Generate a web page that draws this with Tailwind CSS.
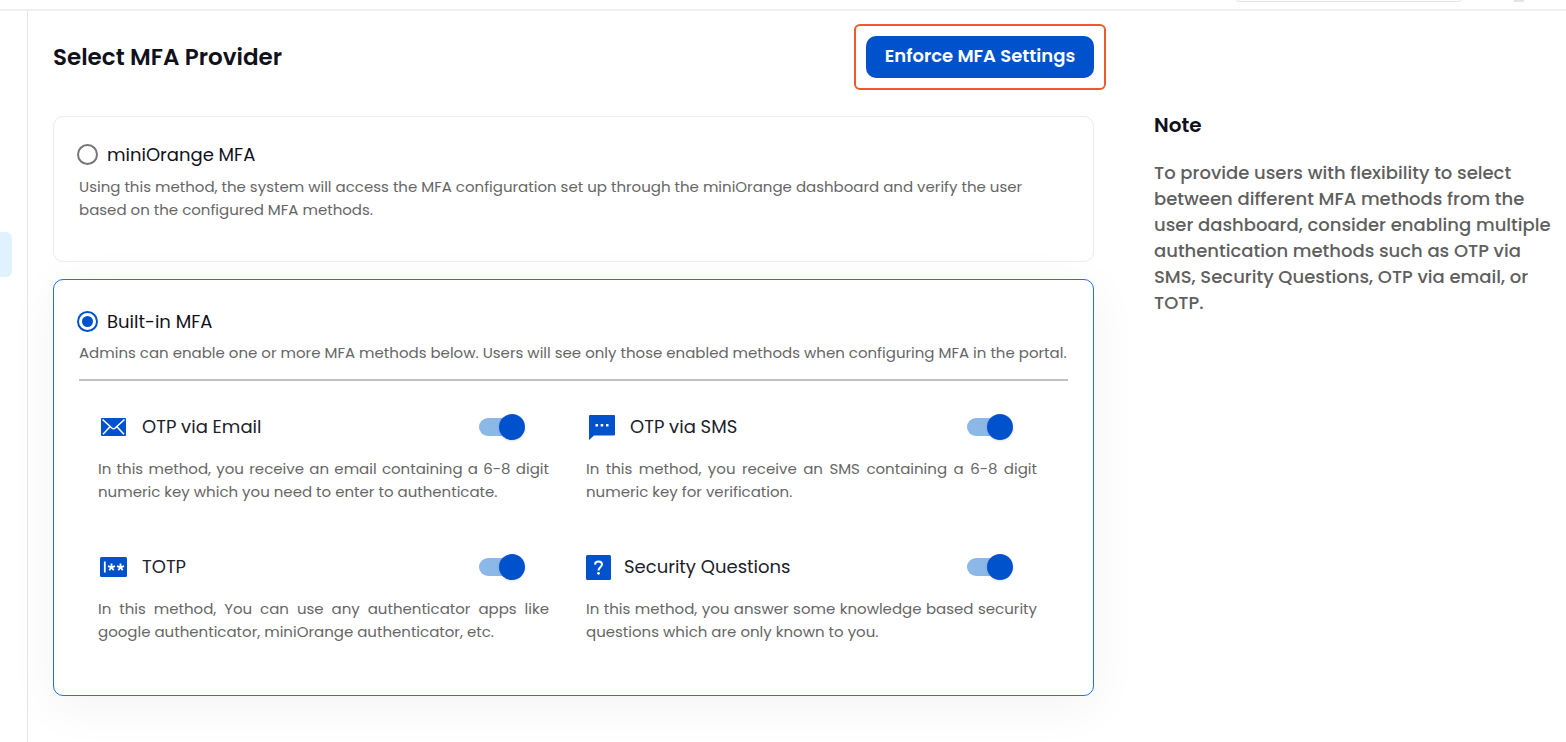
<!DOCTYPE html>
<html lang="en">
<head>
  <meta charset="UTF-8">
  <meta name="viewport" content="width=device-width, initial-scale=1">
  <title>Select MFA Provider</title>
  <!-- Tailwind CSS via CDN -->
  <script src="https://cdn.jsdelivr.net/npm/@tailwindcss/browser@4"></script>
</head>
<body class="min-h-screen flex flex-col bg-white text-[#11111b] font-[Poppins,Inter,sans-serif] overflow-x-hidden">

  <!-- Top bar -->
  <header class="flex h-[11px] items-end justify-end gap-[50px] overflow-hidden border-b-2 border-[#efefef] pr-[42px] pb-[7px]">
    <input type="search" aria-label="Search" class="h-9 w-[230px] shrink-0 rounded-md border border-[#e3e5e8]">
    <button type="button" aria-label="Account" class="h-8 w-[10px] shrink-0 bg-[#e1e4ec]"></button>
  </header>

  <div class="flex flex-1">
    <!-- Collapsed sidebar -->
    <nav class="w-7 shrink-0 border-r border-[#e6e6e6] pt-[221px]" aria-label="Main">
      <a href="#" aria-label="MFA" class="block h-[45px] w-3 rounded-r-md bg-[#e1f2ff]"></a>
    </nav>

    <div class="flex flex-1 gap-[60px] pl-[25px] pr-3">
      <main class="min-w-0 flex-1 pb-[46px]">
        <div class="flex items-center justify-between pt-[25px]">
          <h1 class="text-[23px] leading-8 font-semibold">Select MFA Provider</h1>
          <div class="relative">
            <button type="button" class="h-[42px] w-[228px] rounded-[10px] bg-[#0052cc] pb-[2px] text-lg font-semibold text-white">Enforce MFA Settings</button>
            <span class="pointer-events-none absolute -inset-3 rounded-md border-2 border-[#f0592a]"></span>
          </div>
        </div>

        <!-- miniOrange MFA -->
        <section class="mt-[38px] rounded-[10px] border border-[#ececec] px-[23px] pt-6 pb-10">
          <div class="flex items-center gap-[9px]">
            <input type="radio" name="provider" id="miniorange" class="size-[21px] appearance-none rounded-full border-2 border-[#767676]">
            <label for="miniorange" class="text-lg leading-[27px]">miniOrange MFA</label>
          </div>
          <p class="mt-[7px] px-[2px] text-[15px] leading-[23px] text-[#666]">Using this method, the system will access the MFA configuration set up through the miniOrange dashboard and verify the user based on the configured MFA methods.</p>
        </section>

        <!-- Built-in MFA -->
        <section class="mt-[17px] rounded-[10px] border border-[#1d6fff] bg-white pt-7 pb-[52px] shadow-[0_10px_50px_rgba(0,0,0,0.05)]">
          <div class="px-[23px]">
            <div class="flex items-center gap-[9px]">
              <input type="radio" name="provider" id="builtin" checked class="size-[21px] appearance-none rounded-full border-2 border-[#0052cc] bg-[#0052cc] bg-clip-content p-[3px]">
              <label for="builtin" class="text-lg leading-[27px]">Built-in MFA</label>
            </div>
            <p class="mt-[6px] px-[2px] text-[15px] leading-[23px] text-[#666]">Admins can enable one or more MFA methods below. Users will see only those enabled methods when configuring MFA in the portal.</p>
            <hr class="mx-[2px] mt-[15px] border-t-2 border-[#c2c2c2]">
          </div>

          <div class="mt-8 grid grid-cols-2 gap-x-[37px] gap-y-[50px] pl-11 pr-14">
            <div>
              <div class="flex h-7 items-center pr-6">
                <svg class="ml-[3px] h-[18px] w-[25px]" viewBox="0 0 25 18" fill="none">
                  <rect width="25" height="18" rx="1" fill="#0052cc"/>
                  <path d="M1.5 1.5 10.8 10a2.5 2.5 0 0 0 3.4 0L23.5 1.5M2 16.2l6.8-7.3M23 16.2l-6.8-7.3" stroke="#fff" stroke-width="1.5"/>
                </svg>
                <label for="otp-email" class="ml-4 text-lg text-[#20202a]">OTP via Email</label>
                <span class="relative ml-auto flex h-[26px] w-[46px] items-center">
                  <input type="checkbox" role="switch" id="otp-email" checked class="peer h-[18px] w-10 appearance-none rounded-full bg-[#ccc] checked:bg-[#8cb8e8]">
                  <span class="pointer-events-none absolute left-0 size-[26px] rounded-full bg-white shadow peer-checked:left-5 peer-checked:bg-[#0052cc]"></span>
                </span>
              </div>
              <p class="mt-4 text-justify text-[15px] leading-[23px] text-[#666]">In this method, you receive an email containing a 6-8 digit numeric key which you need to enter to authenticate.</p>
            </div>

            <div>
              <div class="flex h-7 items-center pr-6">
                <svg class="ml-[3px] h-[25px] w-[26px]" viewBox="0 0 26 25">
                  <path d="M0 1a1 1 0 0 1 1-1h24a1 1 0 0 1 1 1v18.500a1 1 0 0 1-1 1H5L0 25Z" fill="#0052cc"/>
                  <path d="M6.500 9h2.500v2.500H6.500zM11.700 9h2.500v2.500h-2.500zM17 9h2.500v2.500H17z" fill="#fff"/>
                </svg>
                <label for="otp-sms" class="ml-[15px] text-lg text-[#20202a]">OTP via SMS</label>
                <span class="relative ml-auto flex h-[26px] w-[46px] items-center">
                  <input type="checkbox" role="switch" id="otp-sms" checked class="peer h-[18px] w-10 appearance-none rounded-full bg-[#ccc] checked:bg-[#8cb8e8]">
                  <span class="pointer-events-none absolute left-0 size-[26px] rounded-full bg-white shadow peer-checked:left-5 peer-checked:bg-[#0052cc]"></span>
                </span>
              </div>
              <p class="mt-4 text-justify text-[15px] leading-[23px] text-[#666]">In this method, you receive an SMS containing a 6-8 digit numeric key for verification.</p>
            </div>

            <div>
              <div class="flex h-7 items-center pr-6">
                <svg class="ml-[2px] h-5 w-[27px]" viewBox="0 0 27 20" fill="none" stroke="#fff">
                  <rect width="27" height="20" rx="1.500" fill="#0052cc" stroke="none"/>
                  <path d="M4.800 4.500v11" stroke-width="1.800"/>
                  <path d="M11.500 10.300V6.600M11.500 10.300l3.500-1.100M11.500 10.300l2.200 3M11.500 10.300l-2.200 3M11.500 10.300 8 9.200" stroke-width="1.800"/>
                  <path d="M20.500 10.300V6.600M20.500 10.300l3.500-1.100M20.500 10.300l2.200 3M20.500 10.300l-2.200 3M20.500 10.300 17 9.200" stroke-width="1.800"/>
                </svg>
                <label for="totp" class="ml-[15px] text-lg text-[#20202a]">TOTP</label>
                <span class="relative ml-auto flex h-[26px] w-[46px] items-center">
                  <input type="checkbox" role="switch" id="totp" checked class="peer h-[18px] w-10 appearance-none rounded-full bg-[#ccc] checked:bg-[#8cb8e8]">
                  <span class="pointer-events-none absolute left-0 size-[26px] rounded-full bg-white shadow peer-checked:left-5 peer-checked:bg-[#0052cc]"></span>
                </span>
              </div>
              <p class="mt-4 text-justify text-[15px] leading-[23px] text-[#666]">In this method, You can use any authenticator apps like google authenticator, miniOrange authenticator, etc.</p>
            </div>

            <div>
              <div class="flex h-7 items-center pr-6">
                <svg class="size-[25px]" viewBox="0 0 25 25" fill="none">
                  <rect width="25" height="25" rx="1.500" fill="#0052cc"/>
                  <path d="M9 9.600c.1-2 1.500-3.200 3.500-3.200 2.100 0 3.500 1.200 3.500 2.900 0 2.800-3.500 3-3.500 6.100" stroke="#fff" stroke-width="2"/>
                  <circle cx="12.500" cy="18.300" r="1.400" fill="#fff"/>
                </svg>
                <label for="questions" class="ml-[13px] text-lg text-[#20202a]">Security Questions</label>
                <span class="relative ml-auto flex h-[26px] w-[46px] items-center">
                  <input type="checkbox" role="switch" id="questions" checked class="peer h-[18px] w-10 appearance-none rounded-full bg-[#ccc] checked:bg-[#8cb8e8]">
                  <span class="pointer-events-none absolute left-0 size-[26px] rounded-full bg-white shadow peer-checked:left-5 peer-checked:bg-[#0052cc]"></span>
                </span>
              </div>
              <p class="mt-4 text-justify text-[15px] leading-[23px] text-[#666]">In this method, you answer some knowledge based security questions which are only known to you.</p>
            </div>
          </div>
        </section>
      </main>

      <!-- Note -->
      <aside class="w-[400px] shrink-0 pt-[99px]">
        <h2 class="text-xl leading-[30px] font-semibold">Note</h2>
        <p class="mt-5 text-lg leading-[26px] font-medium text-[#5f5f5f]">To provide users with flexibility to select between different MFA methods from the user dashboard, consider enabling multiple authentication methods such as OTP via SMS, Security Questions, OTP via email, or TOTP.</p>
      </aside>
    </div>
  </div>
</body>
</html>
